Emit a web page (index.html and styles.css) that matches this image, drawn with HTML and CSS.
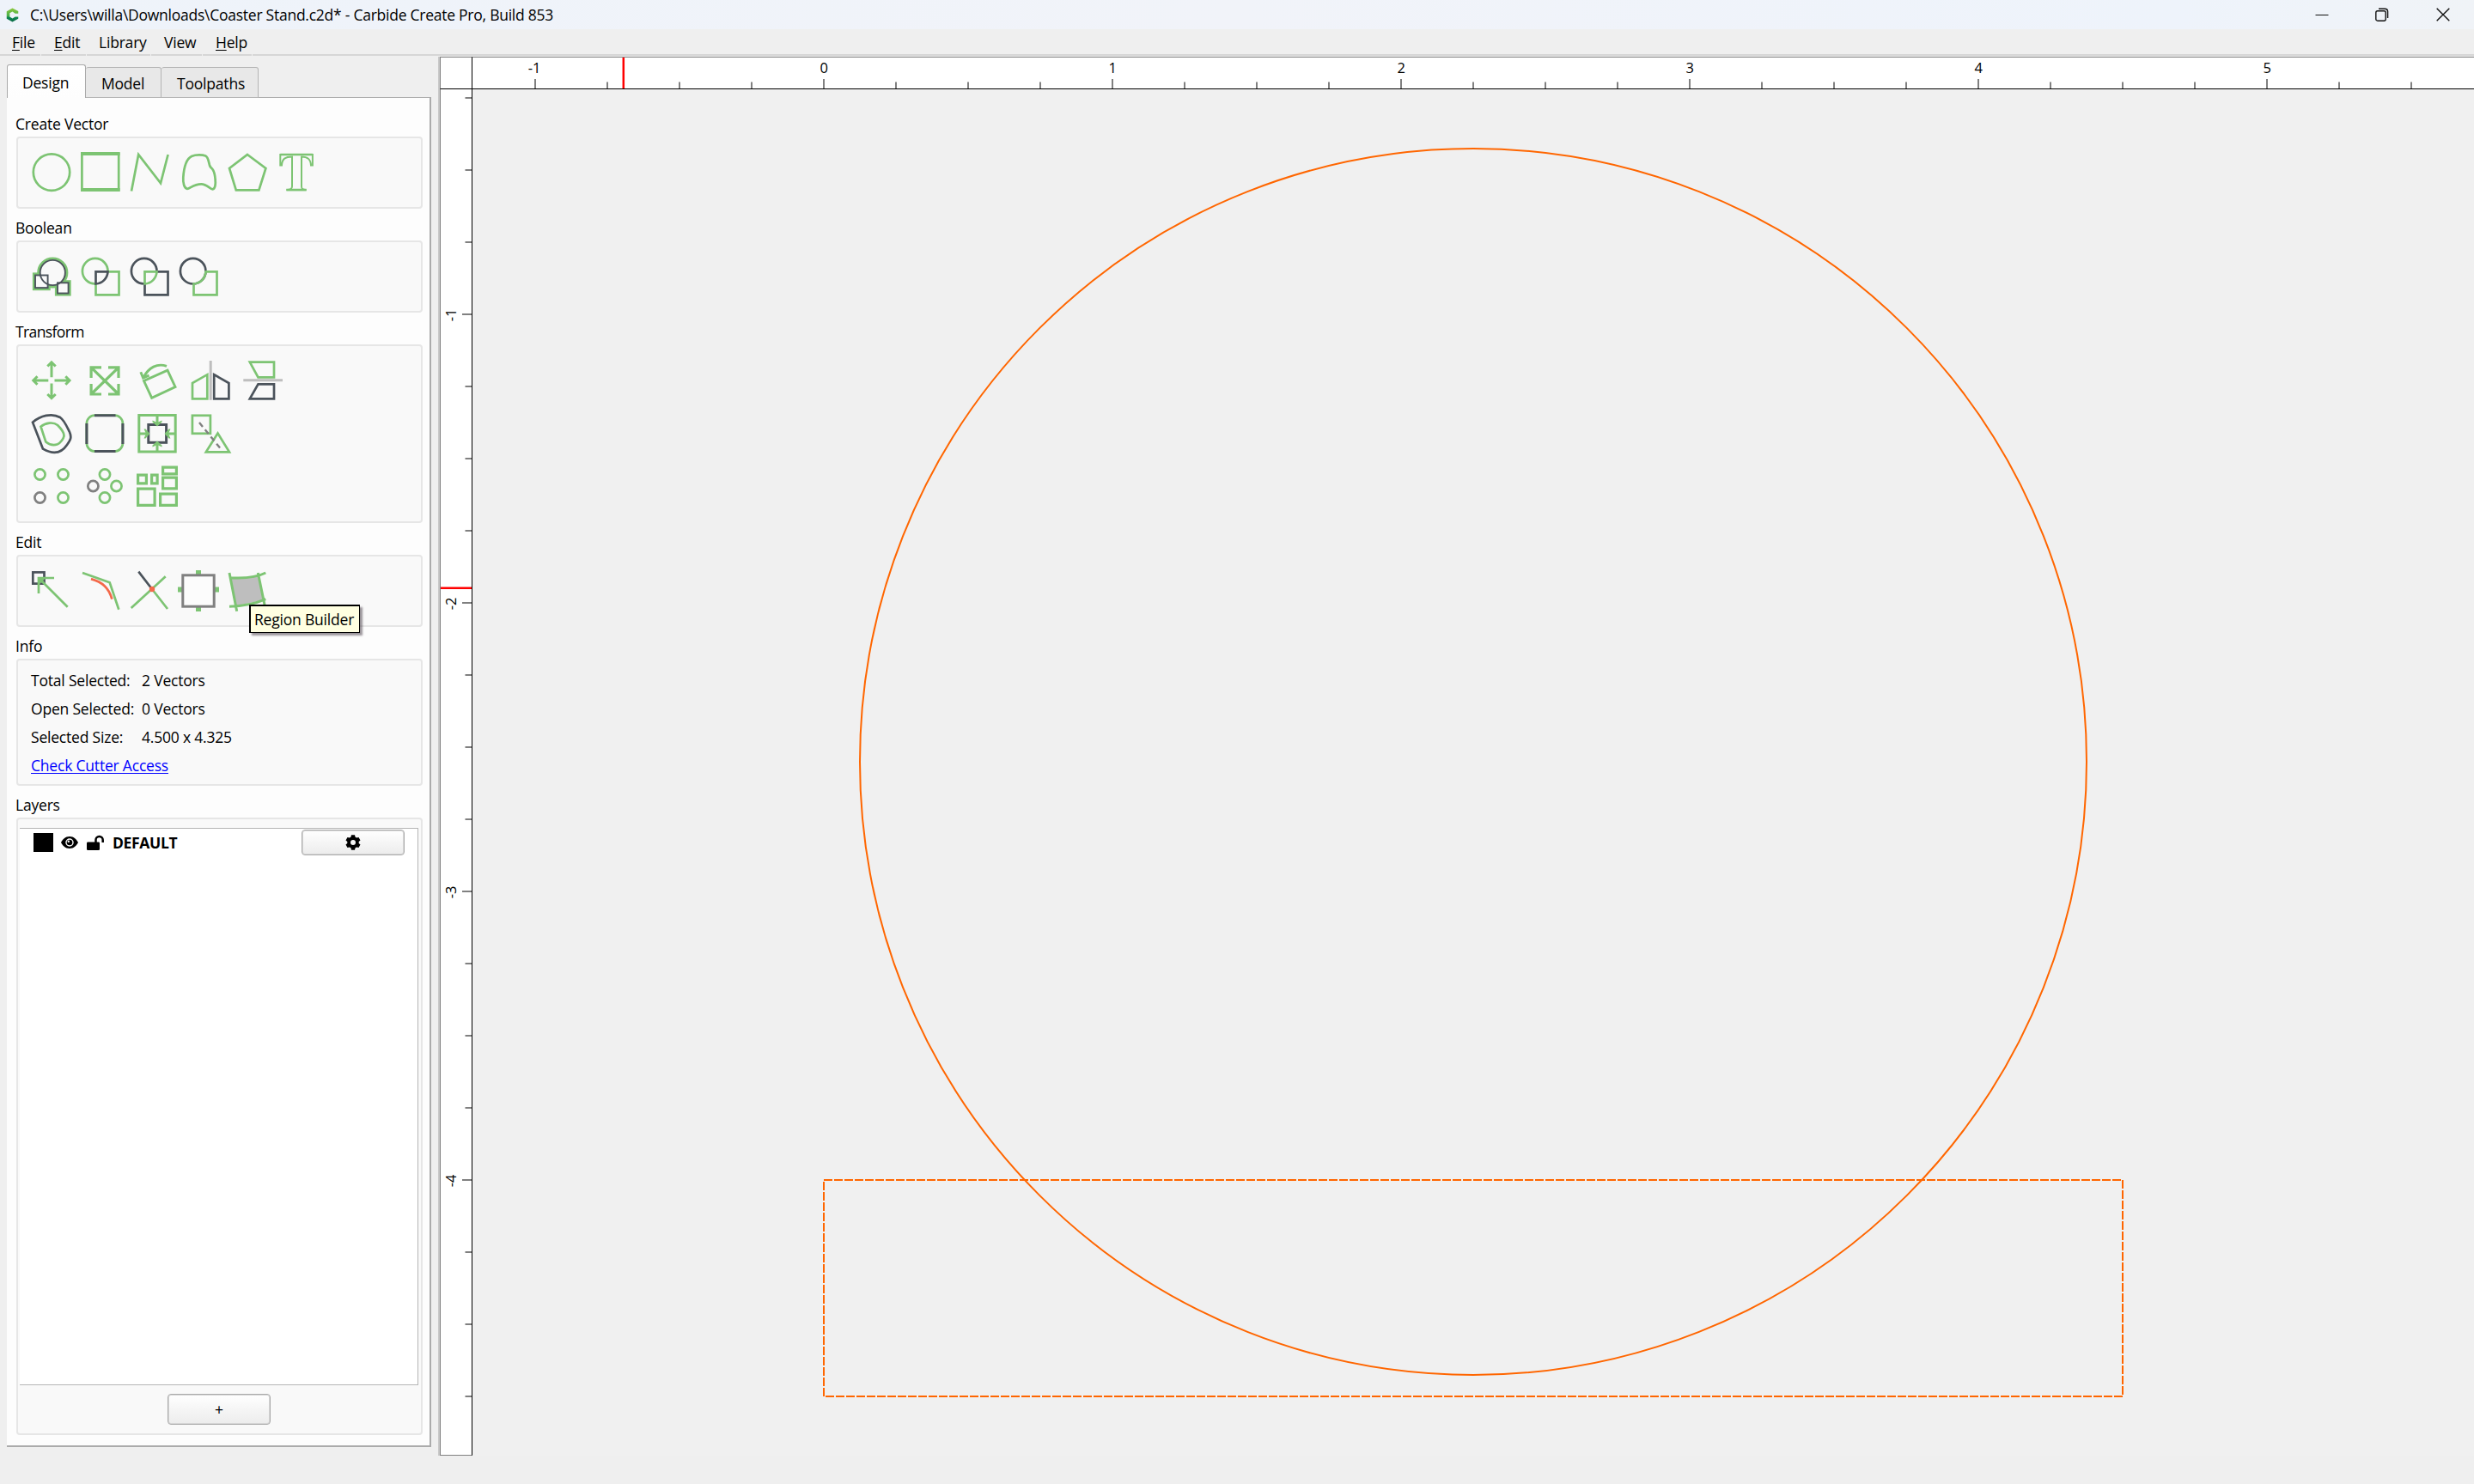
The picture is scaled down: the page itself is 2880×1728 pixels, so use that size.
FILE: index.html
```
<!DOCTYPE html>
<html lang="en">
<head>
<meta charset="utf-8">
<title>Carbide Create Pro</title>
<link rel="stylesheet" href="styles.css">
</head>
<body>
<header class="titlebar">
  <svg class="logo" viewBox="0 0 16 18">
    <defs><linearGradient id="lg" x1="0" y1="0" x2="0" y2="1"><stop offset="0" stop-color="#8cc83c"/><stop offset=".55" stop-color="#4cb04a"/><stop offset=".7" stop-color="#0c8450"/><stop offset="1" stop-color="#0a6a48"/></linearGradient></defs>
    <path d="M8 .5 15.2 4.3 15.2 7 11.4 7 8 4.8 4.6 6.7 4.6 11.2 8 13.2 11.4 11 15.2 11 15.2 13.6 8 17.4 .8 13.4 .8 4.4Z" fill="url(#lg)"/>
  </svg>
  <span class="title">C:\Users\willa\Downloads\Coaster Stand.c2d* - Carbide Create Pro, Build 853</span>
  <div class="winbtns">
    <svg viewBox="0 0 16 16"><path d="M.5 8.5h15" stroke="#111" fill="none"/></svg>
    <svg viewBox="0 0 16 16"><rect x=".8" y="3.8" width="11.4" height="11.4" rx="2" fill="none" stroke="#111" stroke-width="1.4"/><path d="M4 1.2h7.2a3.4 3.4 0 0 1 3.4 3.4V12" fill="none" stroke="#111" stroke-width="1.4"/></svg>
    <svg viewBox="0 0 16 16"><path d="M.7.7 15.3 15.3M15.3.7.7 15.3" stroke="#111" stroke-width="1.4" fill="none"/></svg>
  </div>
</header>
<nav class="menubar">
  <span class="mi m1"><u>F</u>ile</span><span class="mi m2"><u>E</u>dit</span><span class="mi m3">Library</span><span class="mi m4">View</span><span class="mi m5"><u>H</u>elp</span><span class="mi fill"></span>
</nav>
<main class="main">
  <aside class="side">
    <div class="tabs"><span class="tab on">Design</span><span class="tab t2">Model</span><span class="tab t3">Toolpaths</span></div>
    <div class="pane">
      <h2 class="lab">Create Vector</h2>
      <div class="box row">
        <svg class="ic g" viewBox="0 0 48 48"><circle cx="24" cy="23.6" r="21.2"/></svg>
        <svg class="ic g" viewBox="0 0 48 48"><rect x="2.4" y="1.8" width="42.8" height="42.6"/><path d="M1 2h45.6M1 44h45.6" stroke-width="4"/></svg>
        <svg class="ic g" viewBox="0 0 48 48"><path d="M3 45.4 11.2 3 37 36.3 45.6 3"/></svg>
        <svg class="ic g" viewBox="0 0 48 48"><path d="M6.3 29.7C5.8 36 7.5 42.5 11 42.8C14 43 18 37.3 27.3 37.3C34 37.3 37.5 43.5 40.5 43.3C44 43 44 36 43.6 32C43.2 26 42.5 23.5 41 21C39 18 38 18.5 37 15.5C36 12 35.5 6 32.3 4.5C29 3.2 21 2.8 16 5C9 8.5 6.8 22 6.3 29.7Z"/></svg>
        <svg class="ic g" viewBox="0 0 48 48"><path d="M24 3 45.4 19 37.4 44.3H10.8L3 19Z"/></svg>
        <svg class="ic g" viewBox="0 0 48 48"><path stroke-width="2" d="M5.3 15.5V3H42.9V15.5H41C40.6 8 37 5.4 30 5.4V40C30 43 31 43.6 35.5 44.3H12.6C17.5 43.6 19 43 19 40V5.4C11 5.4 7.4 8 7 15.5Z"/><path d="M12.3 44h23.4M5.3 3h37.6"/></svg>
      </div>
      <h2 class="lab">Boolean</h2>
      <div class="box row">
        <svg class="ic" viewBox="0 0 48 48"><g class="g wide"><circle cx="25.3" cy="19.5" r="15"/><rect x="5" y="22.5" width="14.6" height="14.6"/><rect x="31" y="31.3" width="12.6" height="12.2"/></g><g fill="#f9f9f9"><circle cx="25.3" cy="19.5" r="15"/><rect x="5" y="22.5" width="14.6" height="14.6"/><rect x="31" y="31.3" width="12.6" height="12.2"/></g><g class="d thin"><circle cx="25.3" cy="19.5" r="14.6"/><rect x="5" y="22.5" width="14.6" height="14.6"/><rect x="31" y="31.3" width="12.6" height="12.2"/></g></svg>
        <svg class="ic" viewBox="0 0 48 48"><path class="g" d="M32.5 18.3H45.5V45.3H18.5V32.5A14.8 14.8 0 1 1 32.5 18.3Z"/><path class="d" d="M32.5 18.3A14.8 14.8 0 0 1 18.5 32.5V18.3Z"/></svg>
        <svg class="ic" viewBox="0 0 48 48"><path class="d" d="M32.5 18.3H45.5V45.3H18.5V32.5A14.8 14.8 0 1 1 32.5 18.3Z"/><path class="g" d="M32.5 18.3A14.8 14.8 0 0 1 18.5 32.5V18.3Z"/></svg>
        <svg class="ic" viewBox="0 0 48 48"><circle class="d" cx="17.7" cy="17.7" r="14.8"/><path class="g" d="M32.5 18.3H45.5V45.3H18.5V32.5A14.8 14.8 0 0 0 32.5 18.3Z"/></svg>
      </div>
      <h2 class="lab tr">Transform</h2>
      <div class="box grid">
        <svg class="ic g" viewBox="0 0 48 48"><path stroke-width="3" d="M24 2.5V20.3M24 27.5V45M2.5 24H20.3M27.5 24H45M19.3 7.5 24 2.8 28.7 7.5M19.3 40 24 44.7 28.7 40M7.5 19.3 2.8 24 7.5 28.7M40.3 19.3 45 24 40.3 28.7"/></svg>
        <svg class="ic g" viewBox="0 0 48 48"><path stroke-width="3.2" d="M8.1 21V8.8H20M28 8.8H40V21M40 28V40H28M20 40H8.1V28M8.1 8.8 40 40M40 8.8 8.1 40"/></svg>
        <svg class="ic g" viewBox="0 0 48 48"><path stroke-width="2.9" d="M36 12.2 45 31.5 17.7 44.3 8.5 24.5ZM35 7.3C24 3.5 14 9 8 20.5M4.8 14.3 7.6 21 14.5 18.2"/></svg>
        <svg class="ic" viewBox="0 0 48 48"><path class="s" d="M24.2 1V46.8"/><path class="g" d="M20.3 17.2V45.3H3V27Z"/><path class="d" d="M28.2 17.2 45.4 27V45.3H28.2Z"/></svg>
        <svg class="ic" viewBox="0 0 48 48"><path class="s" d="M1.3 23.8H47"/><path class="g" d="M8.8 2.6H37V20.3H18.5Z"/><path class="d" d="M18.5 28.4H37V45.4H8.8Z"/></svg>
        <i></i>
        <svg class="ic" viewBox="0 0 48 48"><path class="d" d="M2 10.7C11 3.2 24 -.6 34 5C39 8.5 42 16 45 22C47.5 28 46.5 31 42 37C35 47.5 25 48 14 41.7Z"/><path class="g" d="M11.5 15.7C17 11 26 10 31 14C34 17 38.5 22 38.5 26C38.5 29.5 34 35 31 36.3C26 38.3 21 36.5 17.3 33.5Z"/></svg>
        <svg class="ic" viewBox="0 0 48 48"><rect class="g" x="2.9" y="2.6" width="42" height="42" rx="9.5"/><path class="d mid" d="M12 2.7H36.5M12 44.6H36.5M2.9 12V36M44.9 12V36"/></svg>
        <svg class="ic" viewBox="0 0 48 48"><rect class="d mid" x="13.8" y="13.5" width="20.8" height="20.8"/><path class="g mid" d="M2.8 2.5H45.2V44.9H2.8ZM24 3V14M24 44V34M3 24H13.5M45 24H35"/><path fill="#7dc473" d="M18.5 10.5 24 15.5 29.5 10.5V8.5L24 11 18.5 8.5ZM18.5 37.5 24 32.5 29.5 37.5V39.5L24 37 18.5 39.5ZM10.5 18.5 15.5 24 10.5 29.5H8.5L11 24 8.5 18.5ZM37.5 18.5 32.5 24 37.5 29.5H39.5L37 24 39.5 18.5Z"/></svg>
        <svg class="ic" viewBox="0 0 48 48"><rect class="g" x="2.9" y="2.8" width="21" height="21"/><path class="g" d="M32.5 23.5 46 45.3H18.8Z"/><path fill="none" stroke="#808080" stroke-width="2.4" stroke-dasharray="6.3 4.3" d="M11 11 36 41.7"/></svg>
        <i></i><i></i>
        <svg class="ic" viewBox="0 0 48 48"><g class="g"><circle cx="10.5" cy="10.5" r="6.1"/><circle cx="37.5" cy="10.5" r="6.1"/><circle cx="37.5" cy="37.5" r="6.1"/></g><circle class="gy" cx="10.5" cy="37.5" r="6.1"/></svg>
        <svg class="ic" viewBox="0 0 48 48"><g class="g"><circle cx="24" cy="10.5" r="6.1"/><circle cx="37.5" cy="24" r="6.1"/><circle cx="24" cy="37.5" r="6.1"/></g><circle class="gy" cx="10.4" cy="24" r="6.1"/></svg>
        <svg class="ic g" viewBox="0 0 48 48"><path stroke-width="3.2" d="M1.6 11.1H11.4V20.9H1.6ZM17.6 11.1H24.1V20.9H17.6ZM30.6 2.1H46.4V9.9H30.6ZM30.6 14.1H46.4V26.9H30.6ZM1.6 27.1H21.1V46.4H1.6ZM27.6 33.1H46.4V46.4H27.6Z"/></svg>
      </div>
      <h2 class="lab">Edit</h2>
      <div class="box row">
        <svg class="ic" viewBox="0 0 48 48"><rect class="d" x="2.3" y="2.4" width="13.2" height="13.2"/><path fill="#7dc473" d="M8 8H18L8 18Z"/><path class="g" d="M27 9H9V27M9 9 42.7 42.7"/></svg>
        <svg class="ic" viewBox="0 0 48 48"><path class="g" d="M3 3 34.7 14.3 45.3 45.7"/><path fill="none" stroke="#f4694a" stroke-width="2.8" d="M13 10.2C26 14 33.5 20 37.4 33.7"/></svg>
        <svg class="ic" viewBox="0 0 48 48"><path class="g" d="M42.7 7.3 2.7 44M27 22 45 45"/><path class="d" d="M11.3 1.7 27 22"/><circle cx="27" cy="22" r="3.2" fill="#f4694a"/></svg>
        <svg class="ic" viewBox="0 0 48 48"><path fill="#7dc473" d="M21 0h6v5h-6zM21 43h6v5h-6zM0 19.5h5v6H0zM43 19.5h5v6h-5z"/><rect x="5.8" y="5.8" width="36.4" height="36.4" fill="#fcfcfc" stroke="#808080" stroke-width="3"/></svg>
        <svg class="ic" viewBox="0 0 48 48"><path fill="#bebebe" d="M4.7 8.7 37 6.7 43.5 34.5 11 41.3Z"/><path class="g mid" d="M3 3 11.7 47.7M36.3 3 45 45M4.7 8.7C20 9.5 34 8.7 45.3 3M3 42.3C18 42 32 39.5 45.3 33.7"/></svg>
        <div class="tip">Region Builder</div>
      </div>
      <h2 class="lab">Info</h2>
      <div class="box info">
        <span>Total Selected:</span><span>2 Vectors</span>
        <span>Open Selected:</span><span>0 Vectors</span>
        <span>Selected Size:</span><span>4.500 x 4.325</span>
        <a class="link">Check Cutter Access</a>
      </div>
      <h2 class="lab">Layers</h2>
      <div class="box layers">
        <div class="list">
          <div class="layer">
            <span class="swatch"></span>
            <svg class="eye" viewBox="0 0 20 14"><path fill-rule="evenodd" d="M10 0C15 0 18.3 3.5 20 7C18.3 10.5 15 14 10 14S1.7 10.5 0 7C1.7 3.5 5 0 10 0ZM10 2.3A4.7 4.7 0 1 0 10 11.7A4.7 4.7 0 1 0 10 2.3Z"/><circle cx="10" cy="7" r="3.3"/><circle cx="8.8" cy="5.8" r="1.2" fill="#fff"/></svg>
            <svg class="lock" viewBox="0 0 20 17"><rect x="0" y="7.5" width="15" height="9.5" rx="1.3"/><path d="M10.5 8V5A4 4 0 0 1 18.7 5V8" fill="none" stroke="#000" stroke-width="2.5"/></svg>
            <b class="name">DEFAULT</b>
            <span class="btn cfg"><svg viewBox="-9 -9 18 18"><path fill-rule="evenodd" d="M-2-8.7H2L2.6-6.3 4.2-5.4 6.5-6.1 8.5-2.6 6.7-.9V.9L8.5 2.6 6.5 6.1 4.2 5.4 2.6 6.3 2 8.7H-2L-2.6 6.3-4.2 5.4-6.5 6.1-8.5 2.6-6.7.9V-.9L-8.5-2.6-6.5-6.1-4.2-5.4-2.6-6.3ZM0-3A3 3 0 1 0 0 3A3 3 0 1 0 0-3Z"/></svg></span>
          </div>
        </div>
        <span class="btn add">+</span>
      </div>
    </div>
  </aside>
  <section class="work">
    <div class="corner"></div>
    <svg class="rtop" viewBox="550 67 2330 36">
      <defs><pattern id="tx" patternUnits="userSpaceOnUse" x="622" y="66" width="84" height="38"><path d="M1 29.5V37" stroke="#808080" stroke-width="2"/></pattern>
      <pattern id="tX" patternUnits="userSpaceOnUse" x="622" y="66" width="336" height="38"><path d="M1 26V37" stroke="#808080" stroke-width="2"/></pattern></defs>
      <rect x="600" y="66" width="2280" height="38" fill="url(#tx)"/><rect x="600" y="66" width="2280" height="38" fill="url(#tX)"/>
      <g class="num"><text x="622" y="85">-1</text><text x="959" y="85">0</text><text x="1295" y="85">1</text><text x="1631" y="85">2</text><text x="1967" y="85">3</text><text x="2303" y="85">4</text><text x="2639" y="85">5</text></g>
      <path d="M725.8 66V103" stroke="#f00" stroke-width="2.5"/>
    </svg>
    <svg class="rleft" viewBox="513 104 36 1590">
      <defs><pattern id="ty" patternUnits="userSpaceOnUse" x="513" y="113" width="37" height="84"><path d="M28.5 1H36" stroke="#808080" stroke-width="2"/></pattern>
      <pattern id="tY" patternUnits="userSpaceOnUse" x="513" y="365" width="37" height="336"><path d="M25 1H36" stroke="#808080" stroke-width="2"/></pattern></defs>
      <rect x="513" y="104" width="37" height="1590" fill="url(#ty)"/><rect x="513" y="200" width="37" height="1480" fill="url(#tY)"/>
      <g class="num"><text transform="translate(531 367) rotate(-90)">-1</text><text transform="translate(531 703) rotate(-90)">-2</text><text transform="translate(531 1039) rotate(-90)">-3</text><text transform="translate(531 1375) rotate(-90)">-4</text></g>
      <path d="M512 684.8H549" stroke="#f00" stroke-width="2.5"/>
    </svg>
    <svg class="canvas" viewBox="550 104 2330 1591">
      <g fill="none" stroke="#ff6600" stroke-width="2"><circle cx="1715" cy="887" r="714"/><path stroke-dasharray="10 2" d="M959 1626V1374H2471V1626H959"/></g>
    </svg>
  </section>
</main>
</body>
</html>
```

FILE: styles.css
```
* { box-sizing: border-box; }
body {
  margin: 0; width: 2880px; height: 1728px; overflow: hidden;
  display: flex; flex-direction: column;
  background: #efefef; color: #000;
  font: 17.5px/24px "Open Sans", "Noto Sans", sans-serif;
  letter-spacing: -0.2px;
}
svg { display: block; flex: none; overflow: visible; }

.titlebar { height: 34px; display: flex; align-items: center; background: linear-gradient(90deg, #eef3fa, #f1f3f9 50%, #eef3fb 88%, #f0f3f7); }
.logo { width: 15px; height: 17px; margin: 0 12px 0 7px; }
.title { letter-spacing: -0.25px; margin-left: 1px; white-space: pre; }
.winbtns { margin-left: auto; display: flex; gap: 54px; padding-right: 28px; }
.winbtns svg { width: 16px; height: 16px; }
.winbtns svg:nth-child(3) { margin-left: 1px; }

.menubar { height: 31px; display: flex; gap: 1px; }
.mi { border-bottom: 2px solid #d6d6d6; padding: 3px 0 0 14px; }
.mi u { text-underline-offset: 2px; text-decoration-thickness: 1px; }
.m1 { width: 47px; } .m2 { width: 52px; padding-left: 15px; }
.m3 { width: 74px; } .m4 { width: 59px; padding-left: 15px; }
.m5 { width: 57px; padding-left: 15px; } .fill { flex: 1; }

.main { flex: 1; display: flex; }
.side { width: 502px; padding: 10px 0 0 8px; margin-right: 8px; height: 1620px; display: flex; flex-direction: column; }
.tabs { display: flex; align-items: flex-end; height: 39px; margin-bottom: -1px; position: relative; }
.tab { height: 36px; padding: 6px 0 0 18px; background: #e8e8e8; border: 1px solid #b4b4b4; border-left-width: 0; border-radius: 3px 3px 0 0; }
.on { width: 92px; height: 39px; padding: 8px 0 0 17px; background: linear-gradient(#fff, #fdfdfd); border: 1px solid #a9a9a9; border-bottom: 0; }
.t2 { width: 88px; } .t3 { width: 113px; }
.pane { flex: 1; background: #fdfdfd; border: solid #ababab; border-width: 1px 2px 2px 0; padding: 8px 8px 0 11px; }

.lab { height: 37px; margin: 0 0 0 -1px; padding-top: 10px; font-size: inherit; font-weight: 400; }
.tr { letter-spacing: -0.6px; }
.box { background: #f9f9f9; border: 2px solid #e6e6e6; border-radius: 4px; height: 84px; }
.row { display: flex; gap: 9px; padding: 16px 15px; position: relative; }
.ic { width: 48px; height: 48px; }
.grid { height: 208px; display: grid; grid-template-columns: repeat(6, 48px); grid-auto-rows: 48px; gap: 13.5px; padding: 16px 15px; }
.g { fill: none; stroke: #7dc473; stroke-width: 2.7; }
.d { fill: none; stroke: #4b535b; stroke-width: 2.7; }
.wide { stroke-width: 6.2; }
.thin { stroke-width: 1.9; }
.mid { stroke-width: 3; }
.gy { fill: none; stroke: #808080; stroke-width: 2.7; }
.s { stroke: #bebebe; stroke-width: 3; }
.tip {
  position: absolute; left: 269px; top: 56px; width: 129px; height: 33px; padding: 3px 0 0 4px;
  background: #ffffe1; border: solid #000; border-width: 2px 1px 1px 2px;
  box-shadow: 3px 3px 2px rgba(60, 50, 60, .5); white-space: nowrap;
}
.info { height: 148px; display: grid; grid-template-columns: 129px 1fr; grid-auto-rows: 33px; padding: 7px 15px; line-height: 33px; }
.info span { white-space: nowrap; }
.link { grid-column: 1 / 3; justify-self: start; color: #00f; text-decoration: underline; text-decoration-thickness: 1px; text-underline-offset: 2px; }
.layers { height: 719px; padding: 10px 3px 0 2px; display: flex; flex-direction: column; align-items: center; }
.list { align-self: stretch; height: 649px; background: #fff; border: solid #b5b5b5; border-width: 1px 1px 1px 0; }
.layer { display: flex; align-items: center; height: 32px; padding: 0 15px 0 16px; }
.swatch { width: 23px; height: 22px; background: #000; margin-top: -1px; }
.eye { width: 20px; height: 14px; margin: -1px 0 0 9px; }
.lock { width: 20px; height: 17px; margin: 0 0 0 10px; }
.name { margin: 0 0 0 10px; letter-spacing: -0.35px; }
.btn { border: 1px solid #ababab; border-radius: 4px; box-shadow: inset 0 0 0 1px #d6d6d6; background: linear-gradient(#fff, #ececec); display: flex; align-items: center; justify-content: center; width: 120px; }
.cfg { height: 30px; margin-left: auto; }
.cfg svg { width: 18px; height: 18px; margin-top: -1px; }
.add { height: 36px; margin-top: 10px; }

.work { width: 2370px; height: 1629px; margin-top: 1px; border-left: 2px solid #c9c9c9; display: grid; grid-template-columns: 38px 2330px; grid-template-rows: 38px 1591px; }
.work svg { overflow: hidden; }
.corner { background: #fff; border: 1px solid; border-color: #808080 #000 #000 #808080; }
.rtop { width: 2330px; height: 38px; background: #fff; border-top: 1px solid #808080; border-bottom: 1px solid #000; }
.rleft { width: 38px; height: 1591px; background: #fff; border: solid #808080; border-width: 0 0 1px 1px; border-right: 1px solid #000; }
.canvas { width: 2330px; height: 1591px; background: #f0f0f0; }
.num { font-size: 16.5px; text-anchor: middle; }
```
